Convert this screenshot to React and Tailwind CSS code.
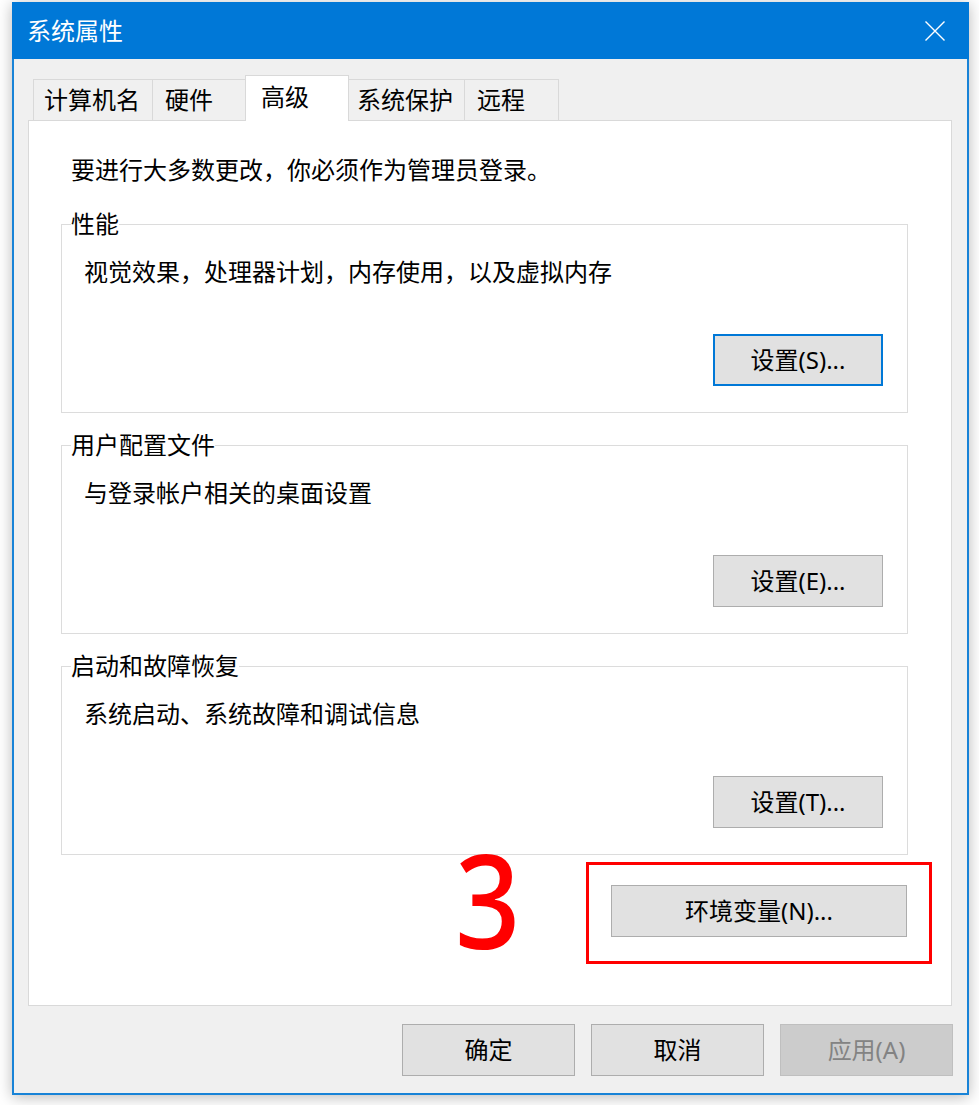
import React from 'react';

const font = "font-['Noto_Sans','Noto_Sans_CJK_SC',sans-serif]";

// 选项卡
function Tab({ label, active, className }) {
    if (active) {
        return (
            <div className={`relative z-10 h-[46px] -mb-px -ml-px bg-white border border-b-0 border-[#d9d9d9] pt-[6px] text-[24px] leading-[30px] text-black ${className}`}>
                {label}
            </div>
        );
    }
    return (
        <div className={`h-[41px] bg-[#f0f0f0] border border-b-0 border-[#d9d9d9] pt-[5px] text-[24px] leading-[30px] text-black ${className}`}>
            {label}
        </div>
    );
}

// 分组框
function Group({ title, desc, button, focused, className }) {
    return (
        <div className={`relative w-[847px] h-[189px] border border-[#dcdcdc] flex flex-col ${className}`}>
            <span className="absolute left-[9px] top-[-16px] bg-white text-[24px] leading-[30px] text-black">
                {title}
            </span>
            <p className="pt-[32px] pl-[22px] text-[24px] leading-[30px] text-black">{desc}</p>
            <button
                className={`mt-auto self-end mr-[24px] mb-[26px] w-[170px] h-[52px] bg-[#e1e1e1] flex items-center justify-center text-[24px] leading-[30px] text-black ${
                    focused ? 'border-2 border-[#0078d7]' : 'border border-[#adadad]'
                }`}
            >
                {button}
            </button>
        </div>
    );
}

function DialogButton({ children, disabled }) {
    return (
        <button
            className={`w-[173px] h-[52px] flex items-center justify-center text-[24px] leading-[30px] border ${
                disabled ? 'bg-[#cccccc] border-[#bfbfbf] text-[#838383]' : 'bg-[#e1e1e1] border-[#adadad] text-black'
            }`}
        >
            {children}
        </button>
    );
}

export default function App() {
    return (
        <div className={`min-h-screen bg-white pt-[2px] pl-[12px] ${font}`}>
            <div className="w-[957px] h-[1093px] flex flex-col border-x-2 border-b-2 border-[#1883d7] shadow-[0_2px_14px_rgba(0,0,0,0.28)]">
                {/* 标题栏 */}
                <div className="h-[57px] -mx-[2px] bg-[#0078d7] flex items-center justify-between pl-[15px] pr-[24px]">
                    <span className="text-[24px] leading-[30px] text-white">系统属性</span>
                    <svg width="20" height="20" viewBox="0 0 20 20" className="text-white">
                        <path d="M0.5 0.5L19.5 19.5M19.5 0.5L0.5 19.5" stroke="currentColor" strokeWidth="1.4" fill="none" />
                    </svg>
                </div>

                {/* 内容 */}
                <div className="flex-1 bg-[#f0f0f0] flex flex-col pl-[14px] pr-[15px]">
                    <div className="mt-[16px] ml-[5px] flex items-end">
                        <Tab label="计算机名" className="w-[120px] pl-[10px]" />
                        <Tab label="硬件" className="w-[94px] pl-[12px] -ml-px" />
                        <Tab label="高级" active className="w-[104px] pl-[15px]" />
                        <Tab label="系统保护" className="w-[117px] pl-[8px] -ml-px" />
                        <Tab label="远程" className="w-[95px] pl-[12px] -ml-px" />
                    </div>

                    <div className="w-[924px] h-[886px] bg-white border border-[#d9d9d9] pt-[34px] pl-[32px]">
                        <p className="pl-[10px] text-[24px] leading-[30px] text-black">
                            要进行大多数更改，你必须作为管理员登录。
                        </p>
                        <Group
                            className="mt-[39px]"
                            title="性能"
                            desc="视觉效果，处理器计划，内存使用，以及虚拟内存"
                            button="设置(S)..."
                            focused
                        />
                        <Group
                            className="mt-[32px]"
                            title="用户配置文件"
                            desc="与登录帐户相关的桌面设置"
                            button="设置(E)..."
                        />
                        <Group
                            className="mt-[32px]"
                            title="启动和故障恢复"
                            desc="系统启动、系统故障和调试信息"
                            button="设置(T)..."
                        />

                        <div className="mt-[7px] w-[871px] flex justify-end items-start">
                            <span className="mr-[66px] -mt-[38px] text-[130px] leading-[150px] font-medium text-[#ff0000] scale-x-[0.88] origin-right">3</span>
                            <div className="w-[346px] h-[102px] border-[3px] border-[#ff0000] pt-[20px] pl-[22px]">
                                <button className="w-[296px] h-[52px] bg-[#e1e1e1] border border-[#adadad] flex items-center justify-center text-[24px] leading-[30px] text-black">
                                    环境变量(N)...
                                </button>
                            </div>
                        </div>
                    </div>

                    <div className="mt-[18px] flex justify-end gap-[16px] -mr-px">
                        <DialogButton>确定</DialogButton>
                        <DialogButton>取消</DialogButton>
                        <DialogButton disabled>应用(A)</DialogButton>
                    </div>
                </div>
            </div>
        </div>
    );
}
